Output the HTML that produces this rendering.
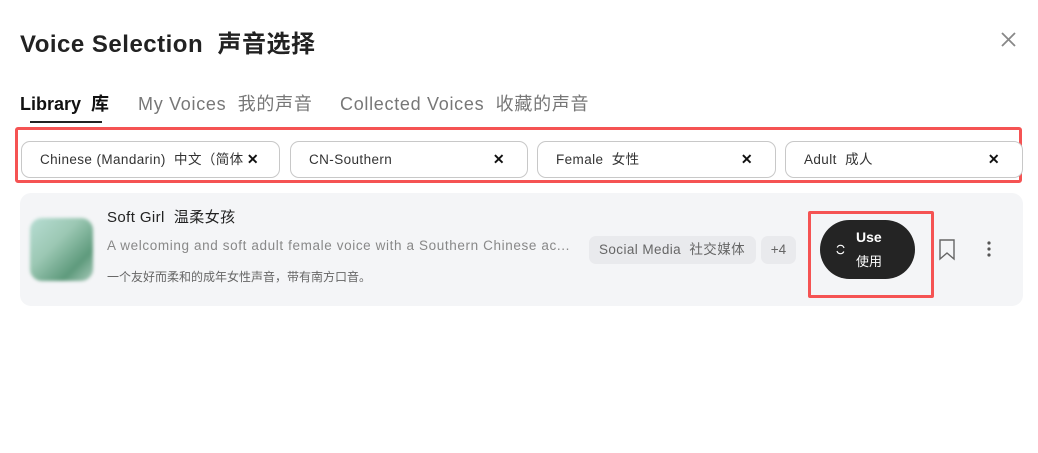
<!DOCTYPE html>
<html><head><meta charset="utf-8"><style>
*{margin:0;padding:0;box-sizing:border-box}
body{width:1038px;height:453px;background:#fff;font-family:"Liberation Sans","Noto Sans CJK SC",sans-serif;position:relative;overflow:hidden;color:#222}
.a{position:absolute;white-space:nowrap}
.chip{position:absolute;top:141px;height:37px;border:1px solid #c8c8c8;border-radius:9px;background:#fff;font-size:13.5px;color:#333;line-height:35px;padding-left:18px;letter-spacing:0.4px}
.chip .x{position:absolute;right:22px;top:0;font-size:14px;font-weight:bold;color:#111}
</style></head><body>
<div class="a" style="left:20px;top:24px;font-size:24px;font-weight:bold;color:#222;letter-spacing:0.5px">Voice Selection&nbsp; 声音选择</div>
<svg class="a" style="left:1000px;top:31px" width="17" height="17" viewBox="0 0 17 17"><path d="M2 2L15 15M15 2L2 15" stroke="#888" stroke-width="1.8"/></svg>
<div class="a" style="left:20px;top:90px;font-size:18px;font-weight:bold;color:#111">Library&nbsp; 库</div>
<div class="a" style="left:30px;top:121px;width:72px;height:2px;background:#222"></div>
<div class="a" style="left:138px;top:90px;font-size:18px;color:#777;letter-spacing:0.7px">My Voices&nbsp; 我的声音</div>
<div class="a" style="left:340px;top:90px;font-size:18px;color:#777;letter-spacing:0.7px">Collected Voices&nbsp; 收藏的声音</div>
<div class="a" style="left:15px;top:127px;width:1007px;height:56px;border:3.5px solid #f55353;border-radius:3px"></div>
<div class="chip" style="left:21px;width:259px">Chinese (Mandarin)&nbsp; 中文（简体<span class="x" style="right:20px">✕</span></div>
<div class="chip" style="left:290px;width:238px">CN-Southern<span class="x">✕</span></div>
<div class="chip" style="left:537px;width:239px">Female&nbsp; 女性<span class="x">✕</span></div>
<div class="chip" style="left:785px;width:238px">Adult&nbsp; 成人<span class="x">✕</span></div>
<div class="a" style="left:20px;top:193px;width:1003px;height:113px;background:#f4f5f7;border-radius:11px"></div>
<div class="a" style="left:30px;top:218px;width:63px;height:63px;border-radius:12px;background:linear-gradient(135deg,#b7ddd3 0%,#9cc8b4 40%,#5e9a7c 75%,#a9cbbb 100%);filter:blur(1.5px)"></div>
<div class="a" style="left:107px;top:206px;font-size:15px;color:#222;letter-spacing:0.4px">Soft Girl&nbsp; 温柔女孩</div>
<div class="a" style="left:107px;top:238px;font-size:13.5px;color:#888;letter-spacing:0.62px">A welcoming and soft adult female voice with a Southern Chinese ac...</div>
<div class="a" style="left:107px;top:268px;font-size:12px;color:#666">一个友好而柔和的成年女性声音，带有南方口音。</div>
<div class="a" style="left:589px;top:236px;width:167px;height:28px;background:#e9eaed;border-radius:7px;font-size:13.5px;color:#666;line-height:28px;padding-left:10px;letter-spacing:0.4px">Social Media&nbsp; 社交媒体</div>
<div class="a" style="left:761px;top:236px;width:35px;height:28px;background:#e9eaed;border-radius:7px;font-size:13.5px;color:#666;line-height:28px;text-align:center">+4</div>
<div class="a" style="left:808px;top:211px;width:126px;height:87px;border:3.5px solid #f55353;border-radius:2px"></div>
<div class="a" style="left:820px;top:220px;width:95px;height:59px;background:#242424;border-radius:30px;color:#fff"></div>
<svg class="a" style="left:835px;top:244px" width="11" height="11" viewBox="0 0 11 11"><path d="M9 4A3.6 3.6 0 0 0 2.2 3.5M2 7A3.6 3.6 0 0 0 8.8 7.5" stroke="#fff" stroke-width="1.2" fill="none"/></svg>
<div class="a" style="left:856px;top:229px;font-size:14px;font-weight:bold;color:#fff">Use</div>
<div class="a" style="left:856px;top:251px;font-size:13px;color:#fff">使用</div>
<svg class="a" style="left:938px;top:239px" width="18" height="22" viewBox="0 0 18 22"><path d="M2 1H16V20L9 14L2 20Z" stroke="#666" stroke-width="1.4" fill="none"/></svg>
<svg class="a" style="left:985px;top:240px" width="8" height="18" viewBox="0 0 8 18"><circle cx="4" cy="3" r="1.6" fill="#555"/><circle cx="4" cy="9" r="1.6" fill="#555"/><circle cx="4" cy="15" r="1.6" fill="#555"/></svg>
</body></html>
